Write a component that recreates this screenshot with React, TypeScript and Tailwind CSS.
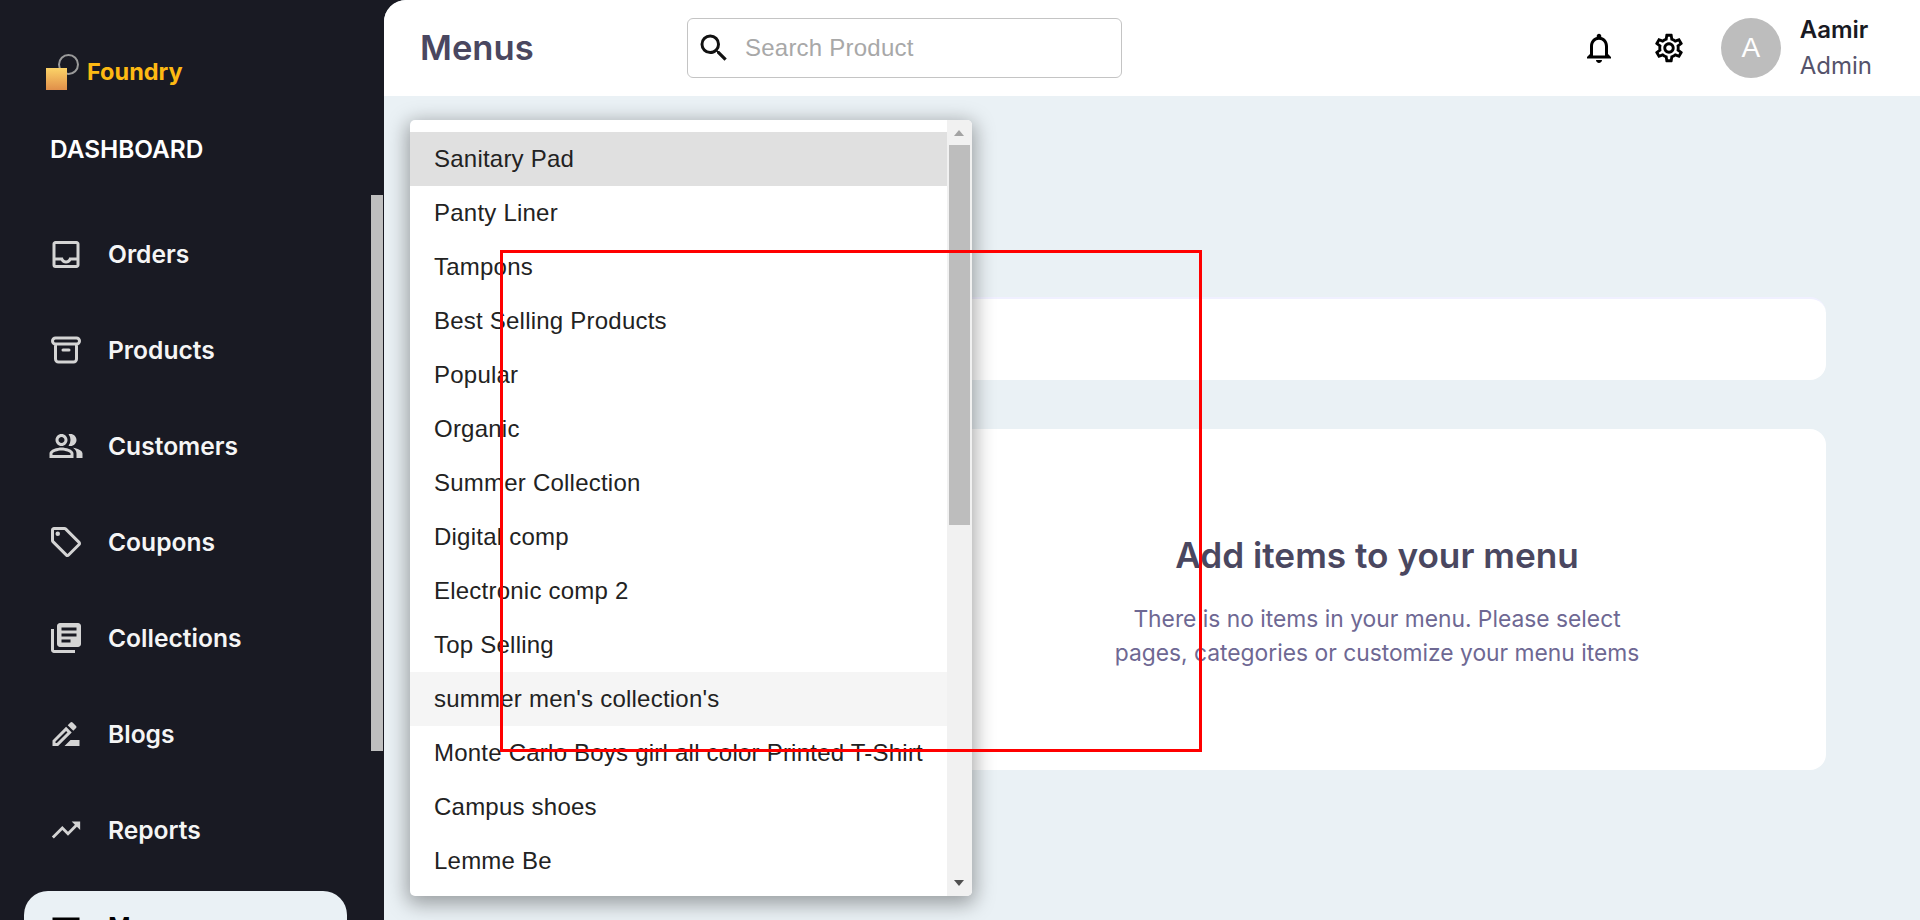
import React from "react";
import {
  MdOutlineInbox,
  MdOutlinePeopleAlt,
  MdOutlineLocalOffer,
  MdLibraryBooks,
  MdOutlineDriveFileRenameOutline,
  MdOutlineTrendingUp,
  MdOutlineNotifications,
  MdOutlineSettings,
  MdSearch,
  MdMenu,
} from "react-icons/md";
import { HiOutlineArchive } from "react-icons/hi";

const navItems = [
  { label: "Orders", icon: <MdOutlineInbox size={37} /> },
  { label: "Products", icon: <HiOutlineArchive size={38} /> },
  { label: "Customers", icon: <MdOutlinePeopleAlt size={38} /> },
  { label: "Coupons", icon: <MdOutlineLocalOffer size={36} /> },
  { label: "Collections", icon: <MdLibraryBooks size={36} /> },
  { label: "Blogs", icon: <MdOutlineDriveFileRenameOutline size={36} /> },
  { label: "Reports", icon: <MdOutlineTrendingUp size={34} /> },
];

const options = [
  "Sanitary Pad",
  "Panty Liner",
  "Tampons",
  "Best Selling Products",
  "Popular",
  "Organic",
  "Summer Collection",
  "Digital comp",
  "Electronic comp 2",
  "Top Selling",
  "summer men's collection's",
  "Monte Carlo Boys girl all color Printed T-Shirt",
  "Campus shoes",
  "Lemme Be",
];

function Sidebar() {
  return (
    <aside className="relative w-[384px] shrink-0 h-full overflow-hidden bg-[#191A23]">
      <div className="flex items-center pl-[46px] pt-[54px] h-[90px]">
        <div className="relative w-[33px] h-[36px]">
          <div className="absolute left-[12px] top-0 w-[21px] h-[21px] rounded-full border-2 border-[#9a9a9a]" />
          <div className="absolute left-0 top-[14px] w-[21px] h-[22px] bg-gradient-to-b from-[#FBD368] to-[#E08F4A]" />
        </div>
        <span className="ml-[8px] text-[23.5px] font-bold text-[#FDB913] leading-none">Foundry</span>
      </div>
      <div className="pl-[50px] mt-[41px] text-[24.4px] leading-[36px] font-semibold text-white">DASHBOARD</div>
      <nav className="mt-[39px] pl-[24px] w-[347px] flex flex-col">
        {navItems.map((item) => (
          <div key={item.label} className="flex items-center h-[96px] pl-[24px] text-[#D4D4D4]">
            <span className="w-[36px] flex justify-center">{item.icon}</span>
            <span className="ml-[24px] text-[24.6px] font-semibold text-[#F5F5F5]">{item.label}</span>
          </div>
        ))}
        <div className="flex items-center h-[96px]">
          <div className="flex items-center w-full h-[70px] pl-[24px] rounded-[24px] bg-[#EAF1F5] text-black">
            <span className="w-[36px] flex justify-center">
              <MdMenu size={37} />
            </span>
            <span className="ml-[24px] text-[24.6px] font-semibold">Menus</span>
          </div>
        </div>
      </nav>
      <div className="absolute right-px top-[195px] w-[12px] h-[556px] bg-[#BFBFBF]" />
    </aside>
  );
}

function Header() {
  return (
    <header className="h-[96px] shrink-0 bg-white flex items-center pl-[36px] pr-[48px]">
      <h1 className="w-[267px] text-[34.6px] font-semibold text-[#4A4760]">Menus</h1>
      <div className="flex items-center w-[435px] h-[60px] rounded-[6px] border border-[#C4C4C4] pl-[8px]">
        <MdSearch size={36} className="text-[#111]" />
        <span className="ml-[13px] text-[24px] tracking-[0.00938em] font-['Liberation_Sans',sans-serif] text-[#A8A8A8]">
          Search Product
        </span>
      </div>
      <div className="ml-auto flex items-center">
        <MdOutlineNotifications size={36} className="text-black" />
        <MdOutlineSettings size={34} className="ml-[35px] text-black" />
        <div className="ml-[35px] w-[60px] h-[60px] rounded-full bg-[#BDBDBD] flex items-center justify-center text-[28px] font-['Liberation_Sans',sans-serif] text-white">
          A
        </div>
        <div className="ml-[19px] flex flex-col">
          <span className="text-[24px] leading-[36px] font-semibold text-[#191A23]">Aamir</span>
          <span className="text-[24px] leading-[36px] text-[#55536B]">Admin</span>
        </div>
      </div>
    </header>
  );
}

function Dropdown() {
  return (
    <div className="absolute left-[26px] top-[120px] w-[562px] h-[776px] flex overflow-hidden rounded-[5px] bg-white shadow-[0_5px_20px_3px_rgba(0,0,0,0.35)]">
      <ul className="flex-1 pt-[12px] font-['Liberation_Sans',sans-serif]">
        {options.map((name, i) => (
          <li
            key={name}
            className={
              "h-[54px] pl-[24px] flex items-center text-[24px] tracking-[0.00938em] whitespace-nowrap text-[#222] " +
              (i === 0 ? "bg-[#E0E0E0]" : i === 10 ? "bg-[#F5F5F5]" : "")
            }
          >
            {name}
          </li>
        ))}
      </ul>
      <div className="relative w-[25px] bg-[#F1F1F1]">
        <div className="absolute left-[7px] top-[10px] w-0 h-0 border-x-[5.5px] border-x-transparent border-b-[6px] border-b-[#A3A3A3]" />
        <div className="absolute left-[2px] top-[25px] w-[21px] h-[380px] bg-[#BDBDBD]" />
        <div className="absolute left-[7px] bottom-[10px] w-0 h-0 border-x-[5.5px] border-x-transparent border-t-[6px] border-t-[#505050]" />
      </div>
    </div>
  );
}

export default function App() {
  return (
    <div className="flex h-screen overflow-hidden bg-[#191A23] font-[Inter,sans-serif]">
      <Sidebar />
      <div className="relative flex-1 flex flex-col overflow-hidden rounded-tl-[22px] bg-[#EAF1F5]">
        <Header />
        <main className="flex-1 pl-[546px] pr-[94px] pt-[201px]">
          <div className="h-[83px] rounded-[16px] bg-white border-t-2 border-[#F0F0FF]" />
          <div className="mt-[49px] h-[341px] pr-[2px] pt-[4px] rounded-[16px] bg-white flex flex-col items-center justify-center text-center">
            <h2 className="text-[35.2px] leading-[44px] font-semibold text-[#4A4760]">Add items to your menu</h2>
            <p className="mt-[25px] w-[540px] text-[22.8px] leading-[34px] text-[#6E6893]">
              There is no items in your menu. Please select pages, categories or customize your menu items
            </p>
          </div>
        </main>
        <Dropdown />
        <div className="absolute left-[116px] top-[250px] w-[702px] h-[502px] border-[3px] border-[#F00]" />
      </div>
    </div>
  );
}
